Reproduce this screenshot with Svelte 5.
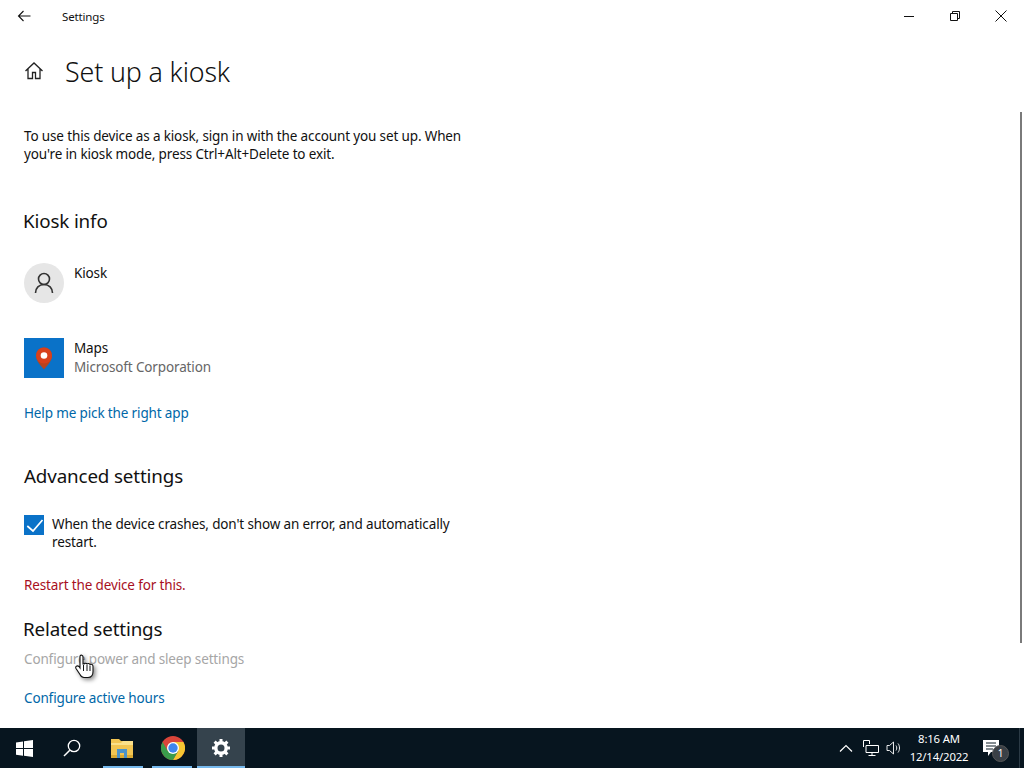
<script>
    const links = ["Configure active hours"];
</script>

<div class="window">
    <header class="titlebar">
        <svg class="back" width="16" height="16" viewBox="0 0 16 16"><path d="M14.500 8H2.500M7.500 3l-5 5 5 5" fill="none" stroke="#111" stroke-width="1.100"/></svg>
        <span class="app-name">Settings</span>
        <div class="controls">
            <svg width="12" height="12" viewBox="0 0 12 12"><path d="M1 6.500h10" stroke="#111" fill="none"/></svg>
            <svg width="12" height="12" viewBox="0 0 12 12"><path d="M1.500 3.500h7v7h-7zM3.500 3.500v-2h7v7h-2" stroke="#111" fill="none"/></svg>
            <svg width="12" height="12" viewBox="0 0 12 12"><path d="M.5.5l11 11M11.500.5l-11 11" stroke="#111" fill="none"/></svg>
        </div>
    </header>

    <div class="body">
        <main class="content">
            <div class="page-head">
                <svg width="20" height="20" viewBox="0 0 20 20"><path d="M1.500 10L10 2l8.500 8M4 8v9.500h4.500v-6h3v6H16V8" fill="none" stroke="#222" stroke-width="1.300"/></svg>
                <h1>Set up a kiosk</h1>
            </div>

            <p class="intro">To use this device as a kiosk, sign in with the account you set up. When you're in kiosk mode, press Ctrl+Alt+Delete to exit.</p>

            <h2 class="kiosk-info">Kiosk info</h2>

            <div class="row user-row">
                <div class="avatar">
                    <svg width="20" height="22" viewBox="0 0 20 22"><circle cx="10" cy="7" r="5.500" fill="none" stroke="#333" stroke-width="1.600"/><path d="M1.500 21c0-5 3.500-8.500 8.500-8.500s8.500 3.500 8.500 8.500" fill="none" stroke="#333" stroke-width="1.600"/></svg>
                </div>
                <div class="info">
                    <div class="name">Kiosk</div>
                </div>
            </div>

            <div class="row app-row">
                <div class="tile">
                    <svg width="18" height="24" viewBox="0 0 18 24"><path d="M9 23.500C6 20 1 15 1 9.500a8 8 0 0 1 16 0C17 15 12 20 9 23.500z" fill="#b8431f"/><circle cx="9" cy="9.500" r="8" fill="#d8401c"/><circle cx="9" cy="9.500" r="3.300" fill="#fff"/></svg>
                </div>
                <div class="info">
                    <div class="name">Maps</div>
                    <div class="sub">Microsoft Corporation</div>
                </div>
            </div>

            <a class="link help" href="#help">Help me pick the right app</a>

            <h2 class="advanced">Advanced settings</h2>

            <label class="check">
                <span class="box">
                    <svg width="20" height="20" viewBox="0 0 20 20"><path d="M3.300 11l5.700 5 9.500-11" fill="none" stroke="#fff" stroke-width="1.700"/></svg>
                </span>
                <span>When the device crashes, don't show an error, and automatically restart.</span>
            </label>

            <p class="warning">Restart the device for this.</p>

            <h2 class="related">Related settings</h2>
            <div class="disabled">Configure power and sleep settings</div>
            {#each links as link}
                <a class="link active-hours" href="#hours">{link}</a>
            {/each}
        </main>
        <div class="track"><div class="thumb"></div></div>
    </div>

    <footer class="taskbar">
        <div class="task start">
            <svg width="17" height="17" viewBox="0 0 17 17"><path d="M0 2.400l7-1v6.700H0zM8 1.300L17 0v8.100H8zM0 9h7v6.700l-7-1zM8 9h9v8l-9-1.300z" fill="#fff"/></svg>
        </div>
        <div class="task">
            <svg width="18" height="18" viewBox="0 0 18 18"><circle cx="11" cy="7" r="5.700" fill="none" stroke="#fff" stroke-width="1.300"/><path d="M6.800 11.200L1 17" stroke="#fff" stroke-width="1.500"/></svg>
        </div>
        <div class="task running folder">
            <svg width="22" height="19" viewBox="0 0 22 19"><path d="M0 0h8l2 2h12v17H0z" fill="#f2c552"/><path d="M0 4h10l2-2h10v4H0z" fill="#fbe08a"/><path d="M0 16h22v3H0z" fill="#d9a932"/><path d="M6 10h10v9h-3v-5H9v5H6z" fill="#4c93c9"/></svg>
        </div>
        <div class="task running chrome">
            <svg width="24" height="24" viewBox="0 0 24 24"><circle cx="12" cy="12" r="12" fill="#d9453a"/><path d="M12 6h10.400A12 12 0 0 1 12 24l5.200-9z" fill="#f7c632"/><path d="M17.200 15L12 24A12 12 0 0 1 1.600 6l5.200 9z" fill="#3a9c4b"/><circle cx="12" cy="12" r="6" fill="#fff"/><circle cx="12" cy="12" r="4.700" fill="#3f86ee"/></svg>
        </div>
        <div class="task running active">
            <svg width="18" height="18" viewBox="0 0 18 18"><circle cx="9" cy="9" r="5.200" fill="none" stroke="#fff" stroke-width="3.400"/><path d="M9 0v3.500M9 14.500V18M0 9h3.500M14.500 9H18M2.600 2.600l2.500 2.500M12.900 12.900l2.500 2.500M15.400 2.600l-2.500 2.500M5.100 12.900l-2.500 2.500" stroke="#fff" stroke-width="3"/></svg>
        </div>

        <div class="tray">
            <svg class="chevron" width="14" height="8" viewBox="0 0 14 8"><path d="M1 7.500l6-6 6 6" fill="none" stroke="#fff" stroke-width="1.200"/></svg>
            <svg class="network" width="16" height="16" viewBox="0 0 16 16"><path d="M.5 7V.5h6V4M3 5.500h12.500v7H3zM9 12.500v3M5.500 15.500h7" fill="none" stroke="#fff"/></svg>
            <svg class="volume" width="16" height="16" viewBox="0 0 16 16"><path d="M1 5.500h2.500L7.500 2v12l-4-3.500H1zM10 5.500c1 1.500 1 3.500 0 5M12 3.500c2 2.500 2 6.500 0 9" fill="none" stroke="#fff" stroke-width=".9"/></svg>
            <div class="clock"><div>8:16 AM</div><div>12/14/2022</div></div>
            <div class="notify">
                <svg width="16" height="16" viewBox="0 0 16 16"><path d="M0 0h16v12H8l-3 4v-4H0z" fill="#fff"/><path d="M3 3h10M3 6h10M3 9h7" stroke="#0b1a24"/></svg>
                <span class="badge">1</span>
            </div>
        </div>
    </footer>

    <svg class="cursor" width="20" height="26" viewBox="0 0 20 26"><path d="M5 2c1-1.500 3-1 3 1v7l1 0c1-1 2.500-1 3 0 1-.8 2.500-.5 3 .5 1.500-.5 3 0 3 2v5c0 4-2 6-5 6H9c-2 0-3-1-4-3l-4-6c-1-2 1-3.500 3-2l1 1.500z" fill="#fff" stroke="#111" stroke-width="1.100"/><path d="M8.500 11v6M12 11v6M15 11.500V17" stroke="#111"/></svg>
</div>

<style>
    :global(body) {
        margin: 0;
        background: #fff;
    }

    .window {
        position: relative;
        width: 1024px;
        height: 768px;
        display: flex;
        flex-direction: column;
        overflow: hidden;
        font-family: "Noto Sans", "Open Sans", sans-serif;
        font-size: 13.500px;
        letter-spacing: -0.14px;
        color: #111;
    }

    .titlebar {
        height: 32px;
        flex: none;
        display: flex;
        align-items: center;
        padding-left: 16px;
    }

    .back {
        margin-right: 30px;
    }

    .app-name {
        font-size: 11.500px;
    }

    .controls {
        margin-left: auto;
        display: flex;
        gap: 34px;
        padding-right: 17px;
    }

    .body {
        flex: 1;
        display: flex;
        min-height: 0;
    }

    .content {
        flex: 1;
        padding-left: 24px;
        overflow: hidden;
    }

    .page-head {
        display: flex;
        align-items: center;
        gap: 21px;
        height: 40px;
        margin-top: 19px;
    }

    h1 {
        margin: 0;
        font-size: 26.800px;
        font-weight: 300;
    }

    h2 {
        margin: 0;
        font-size: 18.800px;
        font-weight: 400;
        line-height: 28px;
    }

    .intro {
        width: 445px;
        margin: 36px 0 0;
        line-height: 18px;
    }

    .kiosk-info {
        margin-top: 44px;
        margin-left: -1px;
    }

    .row {
        display: flex;
        gap: 10px;
    }

    .info {
        padding-top: 1px;
    }

    .user-row {
        margin-top: 28px;
    }

    .avatar {
        width: 40px;
        height: 40px;
        border-radius: 50%;
        background: #e6e6e6;
        display: flex;
        align-items: center;
        justify-content: center;
    }

    .name {
        line-height: 19px;
    }

    .app-row {
        margin-top: 35px;
    }

    .tile {
        width: 40px;
        height: 40px;
        background: #0a72c8;
        display: flex;
        align-items: center;
        justify-content: center;
    }

    .sub {
        color: #666;
        line-height: 19px;
    }

    .link {
        display: block;
        color: #0067a8;
        text-decoration: none;
        line-height: 19px;
    }

    .help {
        margin-top: 26px;
    }

    .advanced {
        margin-top: 39px;
    }

    .check {
        display: flex;
        gap: 8px;
        width: 430px;
        margin-top: 25px;
        line-height: 18px;
    }

    .box {
        width: 20px;
        height: 20px;
        flex: none;
        background: #0a72c8;
    }

    .warning {
        margin: 25px 0 0;
        color: #a80f1e;
        line-height: 19px;
    }

    .related {
        margin-top: 20px;
        margin-left: -1px;
    }

    .disabled {
        margin-top: 7px;
        color: #a6a6a6;
        line-height: 19px;
    }

    .active-hours {
        margin-top: 20px;
    }

    .track {
        width: 4px;
        flex: none;
    }

    .thumb {
        width: 2px;
        height: 531px;
        margin-top: 80px;
        background: #7a7a7a;
    }

    .taskbar {
        height: 40px;
        flex: none;
        display: flex;
        background: #07151f;
        color: #fff;
    }

    .task {
        position: relative;
        width: 48px;
        height: 40px;
        flex: none;
        display: flex;
        align-items: center;
        justify-content: center;
    }

    .folder {
        width: 52px;
    }

    .chrome {
        width: 49px;
    }

    .running::after {
        content: "";
        position: absolute;
        bottom: 0;
        height: 2px;
        background: #76b9ed;
    }

    .folder::after {
        left: 7px;
        right: 5px;
    }

    .chrome::after {
        left: 4px;
        right: 5px;
    }

    .active {
        background: #35434d;
    }

    .active::after {
        left: 0;
        right: 0;
    }

    .tray {
        margin-left: auto;
        margin-right: 4px;
        display: flex;
        align-items: center;
        padding-right: 12px;
        border-right: 1px solid #2b3a45;
    }

    .network {
        margin-left: 10px;
    }

    .volume {
        margin-left: 7px;
    }

    .clock {
        width: 70px;
        font-size: 11.300px;
        line-height: 18px;
        text-align: center;
        margin: 0 9px 0 2px;
    }

    .notify {
        position: relative;
        width: 24px;
        height: 30px;
        display: flex;
        align-items: center;
        justify-content: flex-start;
    }

    .badge {
        position: absolute;
        left: 9px;
        top: 12px;
        width: 15px;
        height: 15px;
        border-radius: 50%;
        background: #3a4046;
        border: 1px solid #555;
        font-size: 10px;
        line-height: 15px;
        text-align: center;
    }

    .cursor {
        position: absolute;
        left: 75px;
        top: 654px;
        filter: drop-shadow(2px 2px 2px rgba(0, 0, 0, 0.45));
    }
</style>
